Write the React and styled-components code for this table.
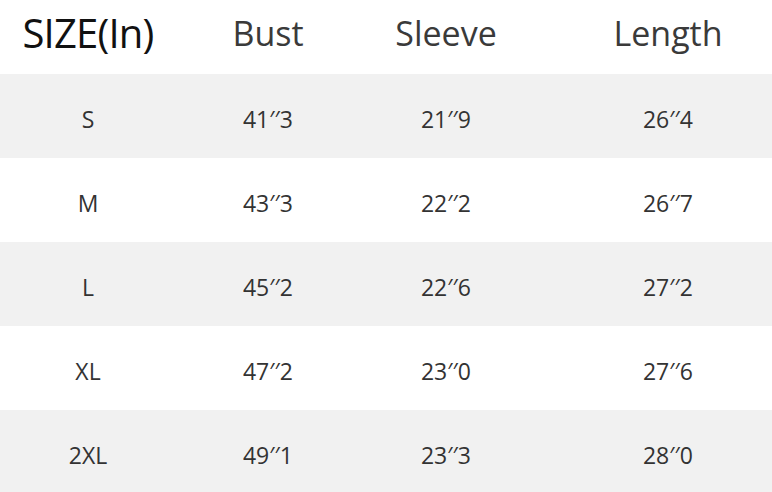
import styled, { createGlobalStyle } from 'styled-components';

const GlobalStyle = createGlobalStyle`
  body {
    margin: 0;
    background: #ffffff;
    font-family: "Open Sans", "Noto Sans", sans-serif;
  }
`;

const Table = styled.div`
  width: 772px;
  height: 492px;
  overflow: hidden;
  display: grid;
  grid-template-columns: 176px 184px 172px 1fr;
  grid-template-rows: 74px repeat(5, 84px);
`;

const Row = styled.div`
  display: contents;
`;

const Cell = styled.div`
  display: flex;
  align-items: center;
  justify-content: center;
  background: ${(p) => (p.$shaded ? '#f1f1f1' : '#ffffff')};
  color: #333333;
  font-size: 23px;
  padding-top: 5px;

  &:last-child {
    padding-left: 32px;
  }
`;

const HeadCell = styled(Cell)`
  padding-top: 0;
  padding-bottom: ${(p) => (p.$main ? '10px' : '9px')};
  color: ${(p) => (p.$main ? '#111111' : '#3a3a3a')};
  font-size: ${(p) => (p.$main ? '40px' : '34px')};
  letter-spacing: ${(p) => (p.$main ? '-0.8px' : '0')};
`;

const headers = ['SIZE(In)', 'Bust', 'Sleeve', 'Length'];

const rows = [
  ['S', '41\u2032\u20323', '21\u2032\u20329', '26\u2032\u20324'],
  ['M', '43\u2032\u20323', '22\u2032\u20322', '26\u2032\u20327'],
  ['L', '45\u2032\u20322', '22\u2032\u20326', '27\u2032\u20322'],
  ['XL', '47\u2032\u20322', '23\u2032\u20320', '27\u2032\u20326'],
  ['2XL', '49\u2032\u20321', '23\u2032\u20323', '28\u2032\u20320'],
];

const App = () => {
  return (
    <>
      <GlobalStyle />
      <Table>
        <Row>
          {headers.map((h, i) => (
            <HeadCell key={h} $main={i === 0}>{h}</HeadCell>
          ))}
        </Row>
        {rows.map((r, i) => (
          <Row key={r[0]}>
            {r.map((v, j) => (
              <Cell key={j} $shaded={i % 2 === 0}>{v}</Cell>
            ))}
          </Row>
        ))}
      </Table>
    </>
  );
};

export default App;
